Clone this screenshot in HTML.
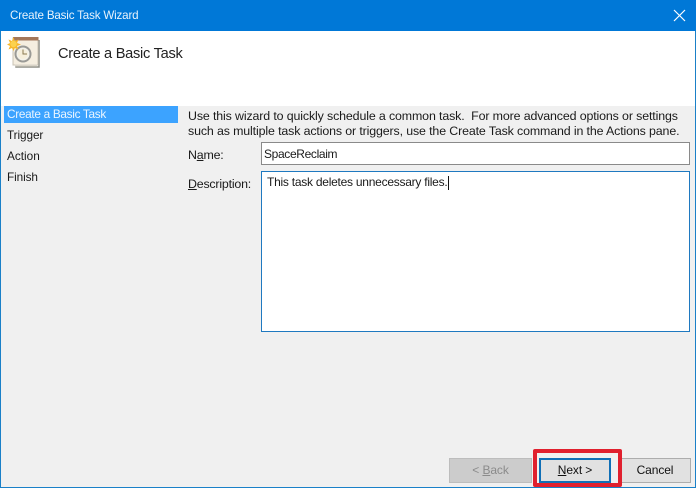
<!DOCTYPE html>
<html><head><meta charset="utf-8"><style>
html,body{margin:0;padding:0}
body{width:696px;height:488px;position:relative;overflow:hidden;background:#f0f0f0;font-family:"Liberation Sans",sans-serif;font-size:12.4px;color:#1a1a1a}
div{position:absolute;white-space:pre;box-sizing:border-box}
u{text-decoration:underline}
</style></head><body>
<div style="left:0;top:0;width:696px;height:31px;background:#0078d7"></div>
<div style="left:10px;top:9px;color:#e8f3fc;font-size:11.6px;letter-spacing:-.17px;line-height:14px">Create Basic Task Wizard</div>
<svg style="position:absolute;left:672px;top:8px" width="15" height="15"><path d="M2 2L13 13M13 2L2 13" stroke="#fff" stroke-width="1.2" fill="none"/></svg>
<div style="left:1px;top:31px;width:694px;height:75px;background:#fff"></div>
<div style="left:58px;top:45px;font-size:14.6px;letter-spacing:-.26px;line-height:18px;color:#222">Create a Basic Task</div>
<svg style="position:absolute;left:6px;top:36px" width="34" height="34" viewBox="0 0 34 34">
<rect x="8" y="3" width="30" height="29" fill="none"/>
<path d="M33 4V31H10V28" stroke="#8d8d86" stroke-width="1.5" fill="none"/>
<rect x="7" y="2" width="25" height="27" fill="#f5eee0" stroke="#c9c3b5"/>
<path d="M9 29.500H31" stroke="#d8d3c7" stroke-width="2"/>
<rect x="7" y="1" width="25.500" height="3.500" fill="#a3775a"/>
<circle cx="17" cy="18" r="7.500" fill="#f4f2ea" stroke="#9a9a96" stroke-width="2"/>
<circle cx="17" cy="18" r="5" fill="#f6efdc"/>
<path d="M17 13.500V18H21" stroke="#8a7a50" stroke-width="1" fill="none"/>
<path d="M7.500 1L8.800 5L12.500 3.500L11 7L15 8.500L11 10L12.500 13.500L8.800 12L7.500 15L6 12L2.500 13.500L4 10L1 8.500L4 7L2.500 3.500L6 5Z" fill="#f7b72a"/>
<circle cx="7.500" cy="8" r="3.200" fill="#fbd24e"/>
</svg>
<div style="left:4px;top:106px;width:174px;height:17px;background:#3ca3ff"></div>
<div style="left:7px;top:107px;color:#eaf5ff;font-size:11.8px;letter-spacing:-.3px;line-height:14px">Create a Basic Task</div>
<div style="left:7px;top:128px;font-size:11.8px;letter-spacing:-.1px;line-height:14px">Trigger</div>
<div style="left:7px;top:149px;font-size:11.8px;line-height:14px">Action</div>
<div style="left:7px;top:170px;font-size:11.8px;letter-spacing:-.1px;line-height:14px">Finish</div>
<div style="left:188px;top:109px;letter-spacing:-.13px;line-height:14px">Use this wizard to quickly schedule a common task.  For more advanced options or settings</div>
<div style="left:188px;top:124px;letter-spacing:-.13px;line-height:14px">such as multiple task actions or triggers, use the Create Task command in the Actions pane.</div>
<div style="left:188px;top:148px;letter-spacing:-.2px;line-height:14px">N<u>a</u>me:</div>
<div style="left:188px;top:177px;letter-spacing:-.2px;line-height:14px"><u>D</u>escription:</div>
<div style="left:261px;top:142px;width:429px;height:23px;background:#fff;border:1px solid #8a8a8a"></div>
<div style="left:264px;top:147px;font-size:12px;letter-spacing:-.35px;line-height:14px">SpaceReclaim</div>
<div style="left:261px;top:171px;width:429px;height:161px;background:#fff;border:1px solid #1f79c0"></div>
<div style="left:267px;top:175px;font-size:12px;letter-spacing:-.25px;line-height:14px">This task deletes unnecessary files.</div>
<div style="left:448px;top:176px;width:1px;height:14px;background:#111"></div>
<div style="left:449px;top:458px;width:83px;height:25px;background:#cccccc;border:1px solid #bdbdbd"></div>
<div style="left:449px;top:458px;width:83px;height:25px;line-height:25px;text-align:center;color:#8b8b8b;font-size:12px;letter-spacing:-.1px">&lt; <u>B</u>ack</div>
<div style="left:539px;top:458px;width:72px;height:25px;background:#e1e1e1;border:2px solid #0f6fb6;line-height:21px;text-align:center;color:#111;font-size:12px;letter-spacing:-.1px"><u>N</u>ext &gt;</div>
<div style="left:619px;top:458px;width:72px;height:25px;background:#e1e1e1;border:1px solid #adadad;line-height:23px;text-align:center;color:#111;font-size:12px;letter-spacing:-.1px">Cancel</div>
<div style="left:533px;top:449px;width:89px;height:38px;border:4px solid #e0202e;border-radius:2px"></div>
<div style="left:0;top:31px;width:1px;height:457px;background:#1a80c8"></div>
<div style="left:695px;top:31px;width:1px;height:457px;background:#1a80c8"></div>
<div style="left:0;top:487px;width:696px;height:1px;background:#1a80c8"></div>
</body></html>
